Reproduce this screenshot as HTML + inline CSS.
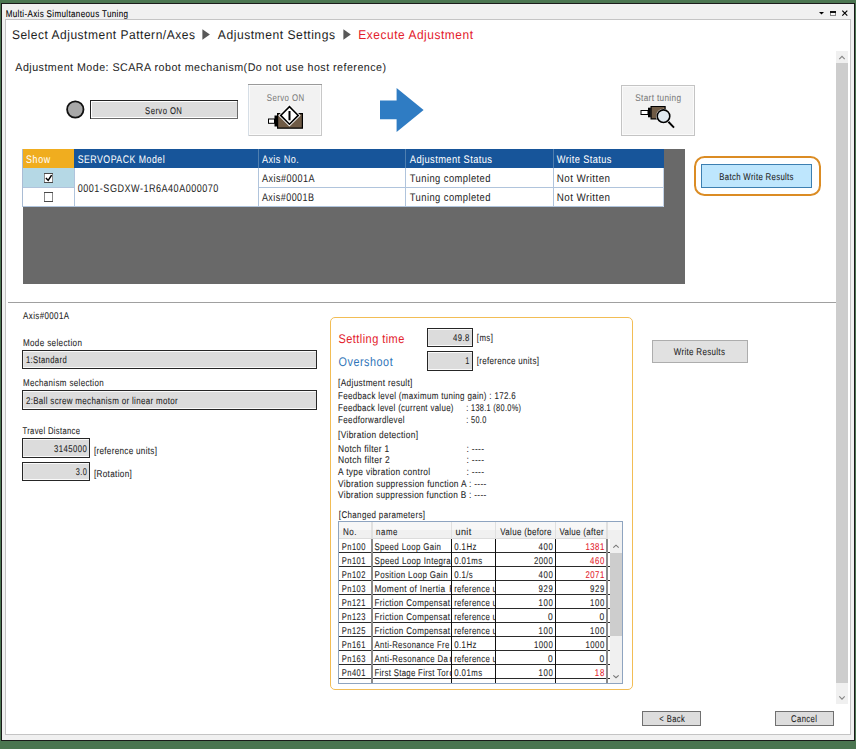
<!DOCTYPE html>
<html><head><meta charset="utf-8"><style>
html,body{margin:0;padding:0;width:856px;height:749px;overflow:hidden;background:#4a7550}
svg{display:block}
text{font-family:"Liberation Sans",sans-serif;white-space:pre;text-rendering:geometricPrecision}
</style></head><body>
<svg width="856" height="749" viewBox="0 0 856 749">
<rect x="0" y="0" width="856" height="749" fill="#4a7550" />
<rect x="1" y="3" width="854" height="738" fill="#1a1a1a" />
<rect x="2" y="4" width="852" height="736" fill="#f0f0f0" />
<text transform="translate(5.70,17) scale(0.8231,1)" x="0" y="0" font-size="9.8" fill="#000" stroke="#000" stroke-width="0.08" letter-spacing="0.410">Multi-Axis Simultaneous Tuning</text>
<path d="M819 12h5l-2.5 2.5z" fill="#000" stroke="none" stroke-width="1" />
<rect x="830" y="11" width="6" height="5" fill="#858585" />
<rect x="831" y="13" width="4" height="2" fill="#f6f6f6" />
<rect x="830" y="11" width="6" height="2" fill="#111" />
<path d="M842.3 10.6l5 5M847.3 10.6l-5 5" fill="none" stroke="#000" stroke-width="1.15" />
<rect x="5" y="19" width="846" height="716" fill="#c4c4c4" />
<rect x="6" y="20" width="844" height="714" fill="#ffffff" />
<text transform="translate(11.90,39) scale(0.9544,1)" x="0" y="0" font-size="12.6" fill="#1e1e1e" stroke="#1e1e1e" stroke-width="0.0" letter-spacing="0.529">Select Adjustment Pattern/Axes</text>
<path d="M202.4 29.3L209.9 34.5L202.4 39.8Z" fill="#585858" stroke="none" stroke-width="1" />
<text transform="translate(217.80,39) scale(0.9623,1)" x="0" y="0" font-size="12.6" fill="#1e1e1e" stroke="#1e1e1e" stroke-width="0.0" letter-spacing="0.541">Adjustment Settings</text>
<path d="M343.4 29.3L350.8 34.5L343.4 39.8Z" fill="#585858" stroke="none" stroke-width="1" />
<text transform="translate(358.20,39) scale(0.9493,1)" x="0" y="0" font-size="12.6" fill="#e3202b" stroke="#e3202b" stroke-width="0.0" letter-spacing="0.570">Execute Adjustment</text>
<text transform="translate(15.30,71) scale(0.9571,1)" x="0" y="0" font-size="11.2" fill="#1e1e1e" stroke="#1e1e1e" stroke-width="0.03" letter-spacing="0.485">Adjustment Mode: SCARA robot mechanism(Do not use host reference)</text>
<circle cx="75.3" cy="109.5" r="8.2" fill="#a8a8a8" stroke="#111" stroke-width="1.8"/>
<rect x="90" y="100" width="148" height="19" fill="#222" />
<rect x="91" y="101" width="147" height="18" fill="#6a6a6a" />
<rect x="91" y="101" width="146" height="17" fill="#fff" />
<rect x="92" y="102" width="145" height="15" fill="#dcdcdc" />
<text transform="translate(145.10,114) scale(0.7873,1)" x="0" y="0" font-size="9.8" fill="#1e1e1e" stroke="#1e1e1e" stroke-width="0.08" letter-spacing="0.534">Servo ON</text>
<rect x="248" y="84" width="74" height="52" fill="#c8c8c8" />
<rect x="248" y="84" width="74" height="1" fill="#9a9a9a" />
<rect x="248" y="85" width="1" height="51" fill="#d6dee6" />
<rect x="249" y="85" width="72" height="50" fill="#fbfbfb" />
<rect x="250" y="86" width="70" height="48" fill="#f2f2f2" />
<text transform="translate(266.80,101) scale(0.7980,1)" x="0" y="0" font-size="9.8" fill="#7a7a7a" stroke="#7a7a7a" stroke-width="0.05" letter-spacing="0.534">Servo ON</text>
<rect x="268" y="118.5" width="7" height="5.3" fill="#000" />
<rect x="269" y="119.5" width="5" height="3.3" fill="#fff" />
<rect x="274.5" y="115.5" width="3" height="11" fill="#000" />
<path d="M277.6 113.6H302.4V128.2H277.6Z" fill="#6f5b46" stroke="#000" stroke-width="1.2" />
<path d="M289.45 106.6L298.2 115.4L289.45 124.2L280.7 115.4Z" fill="none" stroke="#fff" stroke-width="3.4" />
<path d="M289.45 106.6L298.2 115.4L289.45 124.2L280.7 115.4Z" fill="#fff" stroke="#000" stroke-width="1.6" />
<rect x="288.5" y="111" width="2" height="9.3" fill="#000" />
<path d="M380 100.5H396.6V88L423.6 110L396.6 132V119.3H380Z" fill="#2f7cc3" stroke="none" stroke-width="1" />
<rect x="621" y="85" width="74" height="51" fill="#c4c4c4" />
<rect x="622" y="86" width="72" height="49" fill="#fafafa" />
<rect x="623" y="87" width="70" height="47" fill="#f2f2f2" />
<text transform="translate(635.20,101) scale(0.8410,1)" x="0" y="0" font-size="9.8" fill="#7a7a7a" stroke="#7a7a7a" stroke-width="0.05" letter-spacing="0.396">Start tuning</text>
<rect x="640.5" y="110" width="8" height="5" fill="#000" />
<rect x="641.5" y="111" width="6" height="3" fill="#fff" />
<rect x="648" y="107.7" width="2.8" height="9.6" fill="#000" />
<path d="M651.1 106.5H665.1V118.9H651.1Z" fill="#6f5b46" stroke="#000" stroke-width="1.2" />
<line x1="667.2" y1="120.5" x2="674" y2="127.6" stroke="#000" stroke-width="1.9"/>
<circle cx="663.5" cy="116.2" r="7.5" fill="#fff"/>
<circle cx="663.5" cy="116.2" r="6.3" fill="#dfe8ef" stroke="#000" stroke-width="1.6"/>
<rect x="23" y="149" width="662" height="135" fill="#696969" />
<rect x="22" y="149" width="1" height="58" fill="#a9bcd4" />
<rect x="23" y="149" width="51" height="19" fill="#f0ad1f" />
<rect x="74" y="149" width="590" height="19" fill="#17559a" />
<rect x="664" y="149" width="21" height="58" fill="#696969" />
<rect x="258" y="149" width="1" height="19" fill="#4f7fb0" />
<rect x="405" y="149" width="1" height="19" fill="#4f7fb0" />
<rect x="553" y="149" width="1" height="19" fill="#4f7fb0" />
<rect x="23" y="168" width="641" height="39" fill="#ffffff" />
<rect x="664" y="168" width="1" height="39" fill="#696969" />
<rect x="23" y="168" width="51" height="19" fill="#b5d8e5" />
<rect x="74" y="168" width="1" height="39" fill="#b0c4dc" />
<rect x="258" y="168" width="1" height="39" fill="#b0c4dc" />
<rect x="405" y="168" width="1" height="39" fill="#b0c4dc" />
<rect x="553" y="168" width="1" height="39" fill="#b0c4dc" />
<rect x="258" y="187" width="406" height="1" fill="#b0c4dc" />
<rect x="23" y="187" width="51" height="1" fill="#b0c4dc" />
<rect x="23" y="206" width="641" height="1" fill="#b0c4dc" />
<rect x="663" y="168" width="1" height="39" fill="#c4d4e8" />
<rect x="44" y="173" width="9" height="10" fill="#8a8a8a" />
<rect x="44" y="173" width="9" height="1" fill="#4a4a4a" />
<rect x="44" y="182" width="9" height="1" fill="#4a4a4a" />
<rect x="45" y="174" width="7" height="8" fill="#fff" />
<rect x="44" y="192" width="9" height="10" fill="#8a8a8a" />
<rect x="44" y="192" width="9" height="1" fill="#4a4a4a" />
<rect x="44" y="201" width="9" height="1" fill="#4a4a4a" />
<rect x="45" y="193" width="7" height="8" fill="#fff" />
<path d="M45.9 177.9L48.2 180.4L51.6 175.2" fill="none" stroke="#000" stroke-width="1.5" />
<text transform="translate(26.00,163) scale(0.8081,1)" x="0" y="0" font-size="11" fill="#ffffff" stroke="#ffffff" stroke-width="0.03" letter-spacing="0.799">Show</text>
<text transform="translate(77.70,163) scale(0.7959,1)" x="0" y="0" font-size="11" fill="#ffffff" stroke="#ffffff" stroke-width="0.03" letter-spacing="0.624">SERVOPACK Model</text>
<text transform="translate(261.90,163) scale(0.8268,1)" x="0" y="0" font-size="11" fill="#ffffff" stroke="#ffffff" stroke-width="0.03" letter-spacing="0.509">Axis No.</text>
<text transform="translate(409.80,163) scale(0.8473,1)" x="0" y="0" font-size="11" fill="#ffffff" stroke="#ffffff" stroke-width="0.03" letter-spacing="0.485">Adjustment Status</text>
<text transform="translate(556.80,163) scale(0.8399,1)" x="0" y="0" font-size="11" fill="#ffffff" stroke="#ffffff" stroke-width="0.03" letter-spacing="0.472">Write Status</text>
<text transform="translate(77.70,192) scale(0.8247,1)" x="0" y="0" font-size="11" fill="#1e1e1e" stroke="#1e1e1e" stroke-width="0.03" letter-spacing="0.593">0001-SGDXW-1R6A40A000070</text>
<text transform="translate(261.90,182) scale(0.8244,1)" x="0" y="0" font-size="11" fill="#1e1e1e" stroke="#1e1e1e" stroke-width="0.03" letter-spacing="0.567">Axis#0001A</text>
<text transform="translate(261.90,201) scale(0.8166,1)" x="0" y="0" font-size="11" fill="#1e1e1e" stroke="#1e1e1e" stroke-width="0.03" letter-spacing="0.567">Axis#0001B</text>
<text transform="translate(409.80,182) scale(0.8529,1)" x="0" y="0" font-size="11" fill="#1e1e1e" stroke="#1e1e1e" stroke-width="0.03" letter-spacing="0.505">Tuning completed</text>
<text transform="translate(409.80,201) scale(0.8529,1)" x="0" y="0" font-size="11" fill="#1e1e1e" stroke="#1e1e1e" stroke-width="0.03" letter-spacing="0.505">Tuning completed</text>
<text transform="translate(556.80,182) scale(0.8931,1)" x="0" y="0" font-size="11" fill="#1e1e1e" stroke="#1e1e1e" stroke-width="0.03" letter-spacing="0.477">Not Written</text>
<text transform="translate(556.80,201) scale(0.8931,1)" x="0" y="0" font-size="11" fill="#1e1e1e" stroke="#1e1e1e" stroke-width="0.03" letter-spacing="0.477">Not Written</text>
<rect x="695" y="157" width="125" height="38" rx="9.5" fill="none" stroke="#db8c24" stroke-width="2"/>
<rect x="701" y="164" width="111" height="24" fill="#3c7fb1" />
<rect x="702" y="165" width="109" height="22" fill="#bee6fd" />
<text transform="translate(719.30,180) scale(0.7952,1)" x="0" y="0" font-size="9.8" fill="#1e1e1e" stroke="#1e1e1e" stroke-width="0.08" letter-spacing="0.415">Batch Write Results</text>
<rect x="836" y="51" width="12" height="653" fill="#f0f0f0" />
<rect x="836" y="63" width="12" height="620" fill="#cdcdcd" />
<path d="M839.3 59.2L842 56.4L844.7 59.2" fill="none" stroke="#858585" stroke-width="1.1" />
<path d="M839.3 696.3L842 699.1L844.7 696.3" fill="none" stroke="#858585" stroke-width="1.1" />
<rect x="8" y="302" width="828" height="1" fill="#a0a0a0" />
<text transform="translate(23.10,319) scale(0.8074,1)" x="0" y="0" font-size="9.8" fill="#1e1e1e" stroke="#1e1e1e" stroke-width="0.08" letter-spacing="0.505">Axis#0001A</text>
<text transform="translate(22.90,346) scale(0.8237,1)" x="0" y="0" font-size="9.8" fill="#1e1e1e" stroke="#1e1e1e" stroke-width="0.08" letter-spacing="0.441">Mode selection</text>
<rect x="22" y="350" width="295" height="19" fill="#262626" />
<rect x="23" y="351" width="293" height="17" fill="#fafafa" />
<rect x="23" y="352" width="293" height="15" fill="#dcdcdc" />
<rect x="23" y="352" width="1" height="15" fill="#e6e6e6" />
<text transform="translate(25.90,363) scale(0.7828,1)" x="0" y="0" font-size="9.8" fill="#1e1e1e" stroke="#1e1e1e" stroke-width="0.08" letter-spacing="0.463">1:Standard</text>
<text transform="translate(22.90,386) scale(0.8124,1)" x="0" y="0" font-size="9.8" fill="#1e1e1e" stroke="#1e1e1e" stroke-width="0.08" letter-spacing="0.442">Mechanism selection</text>
<rect x="22" y="390" width="295" height="20" fill="#262626" />
<rect x="23" y="391" width="293" height="18" fill="#fafafa" />
<rect x="23" y="392" width="293" height="16" fill="#dcdcdc" />
<rect x="23" y="392" width="1" height="16" fill="#e6e6e6" />
<text transform="translate(25.90,404) scale(0.8141,1)" x="0" y="0" font-size="9.8" fill="#1e1e1e" stroke="#1e1e1e" stroke-width="0.08" letter-spacing="0.403">2:Ball screw mechanism or linear motor</text>
<text transform="translate(22.50,434) scale(0.7814,1)" x="0" y="0" font-size="9.8" fill="#1e1e1e" stroke="#1e1e1e" stroke-width="0.08" letter-spacing="0.420">Travel Distance</text>
<rect x="22" y="438" width="68" height="20" fill="#262626" />
<rect x="23" y="439" width="66" height="18" fill="#fafafa" />
<rect x="23" y="440" width="66" height="16" fill="#dcdcdc" />
<rect x="23" y="440" width="1" height="16" fill="#e6e6e6" />
<text transform="translate(54.00,452) scale(0.7910,1)" x="0" y="0" font-size="9.8" fill="#1e1e1e" stroke="#1e1e1e" stroke-width="0.08" letter-spacing="0.553">3145000</text>
<text transform="translate(93.90,454) scale(0.8251,1)" x="0" y="0" font-size="9.8" fill="#1e1e1e" stroke="#1e1e1e" stroke-width="0.08" letter-spacing="0.382">[reference units]</text>
<rect x="22" y="462" width="68" height="19" fill="#262626" />
<rect x="23" y="463" width="66" height="17" fill="#fafafa" />
<rect x="23" y="464" width="66" height="15" fill="#dcdcdc" />
<rect x="23" y="464" width="1" height="15" fill="#e6e6e6" />
<text transform="translate(75.70,475) scale(0.7509,1)" x="0" y="0" font-size="9.8" fill="#1e1e1e" stroke="#1e1e1e" stroke-width="0.08" letter-spacing="0.591">3.0</text>
<text transform="translate(93.90,477) scale(0.8334,1)" x="0" y="0" font-size="9.8" fill="#1e1e1e" stroke="#1e1e1e" stroke-width="0.08" letter-spacing="0.405">[Rotation]</text>
<rect x="652" y="340" width="96" height="23" fill="#adadad" />
<rect x="653" y="341" width="94" height="21" fill="#e1e1e1" />
<text transform="translate(673.70,355) scale(0.8107,1)" x="0" y="0" font-size="9.8" fill="#1e1e1e" stroke="#1e1e1e" stroke-width="0.08" letter-spacing="0.421">Write Results</text>
<rect x="330.5" y="317.5" width="302" height="372" rx="4.5" fill="#fff" stroke="#f2bd55" stroke-width="1"/>
<text transform="translate(338.50,343) scale(0.8742,1)" x="0" y="0" font-size="12.6" fill="#e3202b" stroke="#e3202b" stroke-width="0.0" letter-spacing="0.503">Settling time</text>
<text transform="translate(338.50,366) scale(0.8575,1)" x="0" y="0" font-size="12.6" fill="#2f75b8" stroke="#2f75b8" stroke-width="0.0" letter-spacing="0.632">Overshoot</text>
<rect x="427" y="328" width="46" height="19" fill="#262626" />
<rect x="428" y="329" width="44" height="17" fill="#fafafa" />
<rect x="428" y="330" width="44" height="15" fill="#dcdcdc" />
<rect x="428" y="330" width="1" height="15" fill="#e6e6e6" />
<text transform="translate(453.10,341) scale(0.7872,1)" x="0" y="0" font-size="9.8" fill="#1e1e1e" stroke="#1e1e1e" stroke-width="0.08" letter-spacing="0.552">49.8</text>
<rect x="427" y="351" width="46" height="20" fill="#262626" />
<rect x="428" y="352" width="44" height="18" fill="#fafafa" />
<rect x="428" y="353" width="44" height="16" fill="#dcdcdc" />
<rect x="428" y="353" width="1" height="16" fill="#e6e6e6" />
<text x="465.30" y="364" font-size="9.8" fill="#1e1e1e" stroke="#1e1e1e" stroke-width="0.08" textLength="4.10" lengthAdjust="spacingAndGlyphs">1</text>
<text transform="translate(476.80,341) scale(0.7957,1)" x="0" y="0" font-size="9.8" fill="#1e1e1e" stroke="#1e1e1e" stroke-width="0.08" letter-spacing="0.536">[ms]</text>
<text transform="translate(476.80,364) scale(0.8133,1)" x="0" y="0" font-size="9.8" fill="#1e1e1e" stroke="#1e1e1e" stroke-width="0.08" letter-spacing="0.382">[reference units]</text>
<text transform="translate(338.10,386) scale(0.8423,1)" x="0" y="0" font-size="9.8" fill="#1e1e1e" stroke="#1e1e1e" stroke-width="0.08" letter-spacing="0.392">[Adjustment result]</text>
<text transform="translate(338.10,399) scale(0.8129,1)" x="0" y="0" font-size="9.8" fill="#1e1e1e" stroke="#1e1e1e" stroke-width="0.08" letter-spacing="0.406">Feedback level (maximum tuning gain) : 172.6</text>
<text transform="translate(338.10,411) scale(0.8055,1)" x="0" y="0" font-size="9.8" fill="#1e1e1e" stroke="#1e1e1e" stroke-width="0.08" letter-spacing="0.395">Feedback level (current value)</text>
<text transform="translate(466.30,411) scale(0.7511,1)" x="0" y="0" font-size="9.8" fill="#1e1e1e" stroke="#1e1e1e" stroke-width="0.08" letter-spacing="0.416">: 138.1 (80.0%)</text>
<text transform="translate(338.10,423) scale(0.8129,1)" x="0" y="0" font-size="9.8" fill="#1e1e1e" stroke="#1e1e1e" stroke-width="0.08" letter-spacing="0.436">Feedforwardlevel</text>
<text transform="translate(466.30,423) scale(0.7510,1)" x="0" y="0" font-size="9.8" fill="#1e1e1e" stroke="#1e1e1e" stroke-width="0.08" letter-spacing="0.426">: 50.0</text>
<text transform="translate(338.10,438) scale(0.8503,1)" x="0" y="0" font-size="9.8" fill="#1e1e1e" stroke="#1e1e1e" stroke-width="0.08" letter-spacing="0.376">[Vibration detection]</text>
<text transform="translate(338.10,452) scale(0.8548,1)" x="0" y="0" font-size="9.8" fill="#1e1e1e" stroke="#1e1e1e" stroke-width="0.08" letter-spacing="0.368">Notch filter 1</text>
<text transform="translate(466.60,452) scale(0.8653,1)" x="0" y="0" font-size="9.8" fill="#1e1e1e" stroke="#1e1e1e" stroke-width="0.08" letter-spacing="0.322">: ----</text>
<text transform="translate(338.10,463) scale(0.8648,1)" x="0" y="0" font-size="9.8" fill="#1e1e1e" stroke="#1e1e1e" stroke-width="0.08" letter-spacing="0.368">Notch filter 2</text>
<text transform="translate(466.60,463) scale(0.8653,1)" x="0" y="0" font-size="9.8" fill="#1e1e1e" stroke="#1e1e1e" stroke-width="0.08" letter-spacing="0.322">: ----</text>
<text transform="translate(338.10,475) scale(0.8537,1)" x="0" y="0" font-size="9.8" fill="#1e1e1e" stroke="#1e1e1e" stroke-width="0.08" letter-spacing="0.375">A type vibration control</text>
<text transform="translate(466.60,475) scale(0.8653,1)" x="0" y="0" font-size="9.8" fill="#1e1e1e" stroke="#1e1e1e" stroke-width="0.08" letter-spacing="0.322">: ----</text>
<text transform="translate(338.10,487) scale(0.8495,1)" x="0" y="0" font-size="9.8" fill="#1e1e1e" stroke="#1e1e1e" stroke-width="0.08" letter-spacing="0.367">Vibration suppression function A : ----</text>
<text transform="translate(338.10,498) scale(0.8437,1)" x="0" y="0" font-size="9.8" fill="#1e1e1e" stroke="#1e1e1e" stroke-width="0.08" letter-spacing="0.370">Vibration suppression function B : ----</text>
<text transform="translate(338.80,518) scale(0.8134,1)" x="0" y="0" font-size="9.8" fill="#1e1e1e" stroke="#1e1e1e" stroke-width="0.08" letter-spacing="0.446">[Changed parameters]</text>
<rect x="338" y="521" width="285" height="163" fill="#8ea4c0" />
<rect x="339" y="522" width="283" height="161" fill="#ffffff" />
<rect x="339" y="522" width="283" height="17" fill="#f0f0f0" />
<rect x="339" y="522" width="283" height="8" fill="#f7f7f7" />
<rect x="371" y="522" width="1" height="17" fill="#e0e0e0" />
<rect x="372" y="522" width="1" height="17" fill="#e0e0e0" />
<rect x="451" y="522" width="1" height="17" fill="#e0e0e0" />
<rect x="495" y="522" width="1" height="17" fill="#e0e0e0" />
<rect x="555" y="522" width="1" height="17" fill="#e0e0e0" />
<rect x="606" y="522" width="1" height="17" fill="#e0e0e0" />
<rect x="607" y="522" width="1" height="17" fill="#e0e0e0" />
<rect x="339" y="552" width="271" height="1" fill="#333" />
<rect x="339" y="566" width="271" height="1" fill="#333" />
<rect x="339" y="580" width="271" height="1" fill="#333" />
<rect x="339" y="594" width="271" height="1" fill="#333" />
<rect x="339" y="608" width="271" height="1" fill="#333" />
<rect x="339" y="622" width="271" height="1" fill="#333" />
<rect x="339" y="636" width="271" height="1" fill="#333" />
<rect x="339" y="650" width="271" height="1" fill="#333" />
<rect x="339" y="664" width="271" height="1" fill="#333" />
<rect x="339" y="678" width="271" height="1" fill="#333" />
<rect x="339" y="538" width="268" height="1" fill="#dcdcdc" />
<rect x="339" y="552" width="271" height="1" fill="#2a2a2a" />
<rect x="339" y="566" width="271" height="1" fill="#2a2a2a" />
<rect x="339" y="580" width="271" height="1" fill="#2a2a2a" />
<rect x="339" y="594" width="271" height="1" fill="#2a2a2a" />
<rect x="339" y="608" width="271" height="1" fill="#2a2a2a" />
<rect x="339" y="622" width="271" height="1" fill="#2a2a2a" />
<rect x="339" y="636" width="271" height="1" fill="#2a2a2a" />
<rect x="339" y="650" width="271" height="1" fill="#2a2a2a" />
<rect x="339" y="664" width="271" height="1" fill="#2a2a2a" />
<rect x="339" y="678" width="271" height="1" fill="#2a2a2a" />
<rect x="371" y="539" width="2" height="144" fill="#8a8a8a" />
<rect x="451" y="539" width="1" height="144" fill="#111" />
<rect x="495" y="539" width="1" height="144" fill="#111" />
<rect x="555" y="539" width="1" height="144" fill="#111" />
<rect x="606" y="539" width="2" height="144" fill="#8a8a8a" />
<defs><clipPath id="c1"><rect x="373" y="539" width="78" height="144"/></clipPath><clipPath id="c2"><rect x="452" y="539" width="43" height="143"/></clipPath></defs>
<text transform="translate(342.90,535) scale(0.8205,1)" x="0" y="0" font-size="9.8" fill="#1e1e1e" stroke="#1e1e1e" stroke-width="0.08" letter-spacing="0.663">No.</text>
<text transform="translate(376.10,535) scale(0.7998,1)" x="0" y="0" font-size="9.8" fill="#1e1e1e" stroke="#1e1e1e" stroke-width="0.08" letter-spacing="0.710">name</text>
<text transform="translate(455.50,535) scale(0.9200,1)" x="0" y="0" font-size="9.8" fill="#1e1e1e" stroke="#1e1e1e" stroke-width="0.08" letter-spacing="0.458">unit</text>
<text transform="translate(500.30,535) scale(0.8107,1)" x="0" y="0" font-size="9.8" fill="#1e1e1e" stroke="#1e1e1e" stroke-width="0.08" letter-spacing="0.421">Value (before</text>
<text transform="translate(559.40,535) scale(0.8141,1)" x="0" y="0" font-size="9.8" fill="#1e1e1e" stroke="#1e1e1e" stroke-width="0.08" letter-spacing="0.395">Value (after</text>
<text transform="translate(341.70,550) scale(0.7723,1)" x="0" y="0" font-size="9.8" fill="#1e1e1e" stroke="#1e1e1e" stroke-width="0.08" letter-spacing="0.616">Pn100</text>
<g clip-path="url(#c1)">
<text transform="translate(374.50,550) scale(0.8018,1)" x="0" y="0" font-size="9.8" fill="#1e1e1e" stroke="#1e1e1e" stroke-width="0.08" letter-spacing="0.474">Speed Loop Gain</text>
</g>
<g clip-path="url(#c2)">
<text transform="translate(454.20,550) scale(0.7982,1)" x="0" y="0" font-size="9.8" fill="#1e1e1e" stroke="#1e1e1e" stroke-width="0.08" letter-spacing="0.557">0.1Hz</text>
</g>
<text transform="translate(538.61,550) scale(0.7982,1)" x="0" y="0" font-size="9.8" fill="#1e1e1e" stroke="#1e1e1e" stroke-width="0.08" letter-spacing="0.711">400</text>
<text transform="translate(585.39,550) scale(0.7982,1)" x="0" y="0" font-size="9.8" fill="#e3202b" stroke="#e3202b" stroke-width="0.08" letter-spacing="0.632">1381</text>
<text transform="translate(341.70,564) scale(0.7723,1)" x="0" y="0" font-size="9.8" fill="#1e1e1e" stroke="#1e1e1e" stroke-width="0.08" letter-spacing="0.616">Pn101</text>
<g clip-path="url(#c1)">
<text transform="translate(374.50,564) scale(0.8153,1)" x="0" y="0" font-size="9.8" fill="#1e1e1e" stroke="#1e1e1e" stroke-width="0.08" letter-spacing="0.440">Speed Loop Integra</text>
<text x="451.50" y="564" font-size="9.8" fill="#1e1e1e" stroke="#1e1e1e" stroke-width="0.08" textLength="1.89" lengthAdjust="spacingAndGlyphs">l</text>
</g>
<g clip-path="url(#c2)">
<text transform="translate(454.20,564) scale(0.7982,1)" x="0" y="0" font-size="9.8" fill="#1e1e1e" stroke="#1e1e1e" stroke-width="0.08" letter-spacing="0.559">0.01ms</text>
</g>
<text transform="translate(533.89,564) scale(0.7982,1)" x="0" y="0" font-size="9.8" fill="#1e1e1e" stroke="#1e1e1e" stroke-width="0.08" letter-spacing="0.632">2000</text>
<text transform="translate(590.11,564) scale(0.7982,1)" x="0" y="0" font-size="9.8" fill="#e3202b" stroke="#e3202b" stroke-width="0.08" letter-spacing="0.711">460</text>
<text transform="translate(341.70,578) scale(0.7723,1)" x="0" y="0" font-size="9.8" fill="#1e1e1e" stroke="#1e1e1e" stroke-width="0.08" letter-spacing="0.616">Pn102</text>
<g clip-path="url(#c1)">
<text transform="translate(374.50,578) scale(0.8122,1)" x="0" y="0" font-size="9.8" fill="#1e1e1e" stroke="#1e1e1e" stroke-width="0.08" letter-spacing="0.424">Position Loop Gain</text>
</g>
<g clip-path="url(#c2)">
<text transform="translate(454.20,578) scale(0.7982,1)" x="0" y="0" font-size="9.8" fill="#1e1e1e" stroke="#1e1e1e" stroke-width="0.08" letter-spacing="0.462">0.1/s</text>
</g>
<text transform="translate(538.61,578) scale(0.7982,1)" x="0" y="0" font-size="9.8" fill="#1e1e1e" stroke="#1e1e1e" stroke-width="0.08" letter-spacing="0.711">400</text>
<text transform="translate(585.39,578) scale(0.7982,1)" x="0" y="0" font-size="9.8" fill="#e3202b" stroke="#e3202b" stroke-width="0.08" letter-spacing="0.632">2071</text>
<text transform="translate(341.70,592) scale(0.7723,1)" x="0" y="0" font-size="9.8" fill="#1e1e1e" stroke="#1e1e1e" stroke-width="0.08" letter-spacing="0.616">Pn103</text>
<g clip-path="url(#c1)">
<text transform="translate(374.50,592) scale(0.8530,1)" x="0" y="0" font-size="9.8" fill="#1e1e1e" stroke="#1e1e1e" stroke-width="0.08" letter-spacing="0.414">Moment of Inertia</text>
<text x="449.30" y="592" font-size="9.8" fill="#1e1e1e" stroke="#1e1e1e" stroke-width="0.08" textLength="6.14" lengthAdjust="spacingAndGlyphs">R</text>
</g>
<g clip-path="url(#c2)">
<text transform="translate(454.20,592) scale(0.7982,1)" x="0" y="0" font-size="9.8" fill="#1e1e1e" stroke="#1e1e1e" stroke-width="0.08" letter-spacing="0.402">reference units</text>
</g>
<text transform="translate(538.61,592) scale(0.7982,1)" x="0" y="0" font-size="9.8" fill="#1e1e1e" stroke="#1e1e1e" stroke-width="0.08" letter-spacing="0.711">929</text>
<text transform="translate(590.11,592) scale(0.7982,1)" x="0" y="0" font-size="9.8" fill="#1e1e1e" stroke="#1e1e1e" stroke-width="0.08" letter-spacing="0.711">929</text>
<text transform="translate(341.70,606) scale(0.7723,1)" x="0" y="0" font-size="9.8" fill="#1e1e1e" stroke="#1e1e1e" stroke-width="0.08" letter-spacing="0.616">Pn121</text>
<g clip-path="url(#c1)">
<text transform="translate(374.50,606) scale(0.8177,1)" x="0" y="0" font-size="9.8" fill="#1e1e1e" stroke="#1e1e1e" stroke-width="0.08" letter-spacing="0.435">Friction Compensat</text>
<text x="451.30" y="606" font-size="9.8" fill="#1e1e1e" stroke="#1e1e1e" stroke-width="0.08" textLength="1.89" lengthAdjust="spacingAndGlyphs">i</text>
</g>
<g clip-path="url(#c2)">
<text transform="translate(454.20,606) scale(0.7982,1)" x="0" y="0" font-size="9.8" fill="#1e1e1e" stroke="#1e1e1e" stroke-width="0.08" letter-spacing="0.402">reference units</text>
</g>
<text transform="translate(538.61,606) scale(0.7982,1)" x="0" y="0" font-size="9.8" fill="#1e1e1e" stroke="#1e1e1e" stroke-width="0.08" letter-spacing="0.711">100</text>
<text transform="translate(590.11,606) scale(0.7982,1)" x="0" y="0" font-size="9.8" fill="#1e1e1e" stroke="#1e1e1e" stroke-width="0.08" letter-spacing="0.711">100</text>
<text transform="translate(341.70,620) scale(0.7723,1)" x="0" y="0" font-size="9.8" fill="#1e1e1e" stroke="#1e1e1e" stroke-width="0.08" letter-spacing="0.616">Pn123</text>
<g clip-path="url(#c1)">
<text transform="translate(374.50,620) scale(0.8177,1)" x="0" y="0" font-size="9.8" fill="#1e1e1e" stroke="#1e1e1e" stroke-width="0.08" letter-spacing="0.435">Friction Compensat</text>
<text x="451.30" y="620" font-size="9.8" fill="#1e1e1e" stroke="#1e1e1e" stroke-width="0.08" textLength="1.89" lengthAdjust="spacingAndGlyphs">i</text>
</g>
<g clip-path="url(#c2)">
<text transform="translate(454.20,620) scale(0.7982,1)" x="0" y="0" font-size="9.8" fill="#1e1e1e" stroke="#1e1e1e" stroke-width="0.08" letter-spacing="0.402">reference units</text>
</g>
<text x="548.07" y="620" font-size="9.8" fill="#1e1e1e" stroke="#1e1e1e" stroke-width="0.08" textLength="4.73" lengthAdjust="spacingAndGlyphs">0</text>
<text x="599.57" y="620" font-size="9.8" fill="#1e1e1e" stroke="#1e1e1e" stroke-width="0.08" textLength="4.73" lengthAdjust="spacingAndGlyphs">0</text>
<text transform="translate(341.70,634) scale(0.7723,1)" x="0" y="0" font-size="9.8" fill="#1e1e1e" stroke="#1e1e1e" stroke-width="0.08" letter-spacing="0.616">Pn125</text>
<g clip-path="url(#c1)">
<text transform="translate(374.50,634) scale(0.8177,1)" x="0" y="0" font-size="9.8" fill="#1e1e1e" stroke="#1e1e1e" stroke-width="0.08" letter-spacing="0.435">Friction Compensat</text>
<text x="451.30" y="634" font-size="9.8" fill="#1e1e1e" stroke="#1e1e1e" stroke-width="0.08" textLength="1.89" lengthAdjust="spacingAndGlyphs">i</text>
</g>
<g clip-path="url(#c2)">
<text transform="translate(454.20,634) scale(0.7982,1)" x="0" y="0" font-size="9.8" fill="#1e1e1e" stroke="#1e1e1e" stroke-width="0.08" letter-spacing="0.402">reference units</text>
</g>
<text transform="translate(538.61,634) scale(0.7982,1)" x="0" y="0" font-size="9.8" fill="#1e1e1e" stroke="#1e1e1e" stroke-width="0.08" letter-spacing="0.711">100</text>
<text transform="translate(590.11,634) scale(0.7982,1)" x="0" y="0" font-size="9.8" fill="#1e1e1e" stroke="#1e1e1e" stroke-width="0.08" letter-spacing="0.711">100</text>
<text transform="translate(341.70,648) scale(0.7723,1)" x="0" y="0" font-size="9.8" fill="#1e1e1e" stroke="#1e1e1e" stroke-width="0.08" letter-spacing="0.616">Pn161</text>
<g clip-path="url(#c1)">
<text transform="translate(374.50,648) scale(0.7896,1)" x="0" y="0" font-size="9.8" fill="#1e1e1e" stroke="#1e1e1e" stroke-width="0.08" letter-spacing="0.446">Anti-Resonance Fre</text>
</g>
<g clip-path="url(#c2)">
<text transform="translate(454.20,648) scale(0.7982,1)" x="0" y="0" font-size="9.8" fill="#1e1e1e" stroke="#1e1e1e" stroke-width="0.08" letter-spacing="0.557">0.1Hz</text>
</g>
<text transform="translate(533.89,648) scale(0.7982,1)" x="0" y="0" font-size="9.8" fill="#1e1e1e" stroke="#1e1e1e" stroke-width="0.08" letter-spacing="0.632">1000</text>
<text transform="translate(585.39,648) scale(0.7982,1)" x="0" y="0" font-size="9.8" fill="#1e1e1e" stroke="#1e1e1e" stroke-width="0.08" letter-spacing="0.632">1000</text>
<text transform="translate(341.70,662) scale(0.7723,1)" x="0" y="0" font-size="9.8" fill="#1e1e1e" stroke="#1e1e1e" stroke-width="0.08" letter-spacing="0.616">Pn163</text>
<g clip-path="url(#c1)">
<text transform="translate(374.50,662) scale(0.7944,1)" x="0" y="0" font-size="9.8" fill="#1e1e1e" stroke="#1e1e1e" stroke-width="0.08" letter-spacing="0.462">Anti-Resonance Da</text>
<text x="449.40" y="662" font-size="9.8" fill="#1e1e1e" stroke="#1e1e1e" stroke-width="0.08" textLength="7.08" lengthAdjust="spacingAndGlyphs">m</text>
</g>
<g clip-path="url(#c2)">
<text transform="translate(454.20,662) scale(0.7982,1)" x="0" y="0" font-size="9.8" fill="#1e1e1e" stroke="#1e1e1e" stroke-width="0.08" letter-spacing="0.402">reference units</text>
</g>
<text x="548.07" y="662" font-size="9.8" fill="#1e1e1e" stroke="#1e1e1e" stroke-width="0.08" textLength="4.73" lengthAdjust="spacingAndGlyphs">0</text>
<text x="599.57" y="662" font-size="9.8" fill="#1e1e1e" stroke="#1e1e1e" stroke-width="0.08" textLength="4.73" lengthAdjust="spacingAndGlyphs">0</text>
<text transform="translate(341.70,676) scale(0.7723,1)" x="0" y="0" font-size="9.8" fill="#1e1e1e" stroke="#1e1e1e" stroke-width="0.08" letter-spacing="0.616">Pn401</text>
<g clip-path="url(#c1)">
<text transform="translate(374.50,676) scale(0.7992,1)" x="0" y="0" font-size="9.8" fill="#1e1e1e" stroke="#1e1e1e" stroke-width="0.08" letter-spacing="0.371">First Stage First Tor</text>
<text x="449.60" y="676" font-size="9.8" fill="#1e1e1e" stroke="#1e1e1e" stroke-width="0.08" textLength="4.73" lengthAdjust="spacingAndGlyphs">q</text>
</g>
<g clip-path="url(#c2)">
<text transform="translate(454.20,676) scale(0.7982,1)" x="0" y="0" font-size="9.8" fill="#1e1e1e" stroke="#1e1e1e" stroke-width="0.08" letter-spacing="0.559">0.01ms</text>
</g>
<text transform="translate(538.61,676) scale(0.7982,1)" x="0" y="0" font-size="9.8" fill="#1e1e1e" stroke="#1e1e1e" stroke-width="0.08" letter-spacing="0.711">100</text>
<text transform="translate(594.84,676) scale(0.7982,1)" x="0" y="0" font-size="9.8" fill="#e3202b" stroke="#e3202b" stroke-width="0.08" letter-spacing="0.948">18</text>
<rect x="610" y="539" width="12" height="144" fill="#f0f0f0" />
<rect x="610" y="553" width="12" height="83" fill="#cdcdcd" />
<path d="M613.3 547.6L616 545.2L618.7 547.6" fill="none" stroke="#777" stroke-width="1.1" />
<path d="M613.3 675.3L616 677.7L618.7 675.3" fill="none" stroke="#777" stroke-width="1.1" />
<rect x="642" y="711" width="59" height="15" fill="#707070" />
<rect x="643" y="712" width="57" height="13" fill="#dddddd" />
<text transform="translate(659.30,722) scale(0.7773,1)" x="0" y="0" font-size="9.8" fill="#1e1e1e" stroke="#1e1e1e" stroke-width="0.08" letter-spacing="0.527">&lt; Back</text>
<rect x="775" y="711" width="59" height="15" fill="#707070" />
<rect x="776" y="712" width="57" height="13" fill="#dddddd" />
<text transform="translate(791.00,722) scale(0.7843,1)" x="0" y="0" font-size="9.8" fill="#1e1e1e" stroke="#1e1e1e" stroke-width="0.08" letter-spacing="0.530">Cancel</text>
</svg>
</body></html>
